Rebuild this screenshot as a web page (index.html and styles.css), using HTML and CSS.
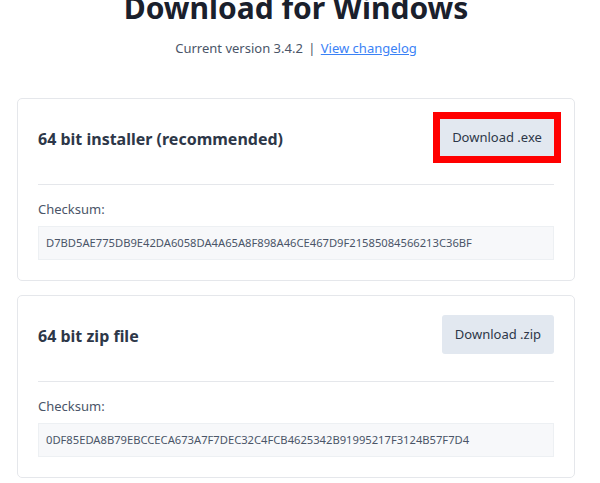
FILE: index.html
```html
<!DOCTYPE html>
<html>
<head>
<meta charset="utf-8">
<link rel="stylesheet" href="styles.css">
</head>
<body>
<div class="page">
  <h1 class="title">Download for Windows</h1>
  <p class="subtitle">Current version 3.4.2 <span class="sep">|</span> <a class="link" href="#">View changelog</a></p>

  <div class="card">
    <div class="card-head">
      <h2 class="card-title">64 bit installer (recommended)</h2>
      <a class="btn btn-highlight" href="#">Download .exe</a>
    </div>
    <div class="card-body">
      <div class="label">Checksum:</div>
      <div class="checksum">D7BD5AE775DB9E42DA6058DA4A65A8F898A46CE467D9F21585084566213C36BF</div>
    </div>
  </div>

  <div class="card">
    <div class="card-head">
      <h2 class="card-title">64 bit zip file</h2>
      <a class="btn" href="#">Download .zip</a>
    </div>
    <div class="card-body">
      <div class="label">Checksum:</div>
      <div class="checksum">0DF85EDA8B79EBCCECA673A7F7DEC32C4FCB4625342B91995217F3124B57F7D4</div>
    </div>
  </div>
</div>
</body>
</html>
```

FILE: styles.css
```css
* { box-sizing: border-box; }
html, body { margin: 0; padding: 0; background: #ffffff; }
body {
  font-family: "Noto Sans", "Open Sans", sans-serif;
  color: #2d3748;
  overflow: hidden;
}
.page {
  width: 558px;
  margin-left: 17px;
}
.title {
  margin: -10px 0 0 0;
  font-size: 30px;
  line-height: 36px;
  font-weight: 700;
  text-align: center;
  color: #1a202c;
}
.subtitle {
  margin: 12px 0 0 0;
  font-size: 13px;
  line-height: 20px;
  text-align: center;
  color: #4a5568;
}
.sep { margin: 0 2px; }
.link {
  color: #3b82f6;
  text-decoration: underline;
}
.card {
  margin-top: 40px;
  border: 1px solid #e5e7eb;
  border-radius: 5px;
  padding: 19px 20px 20px 20px;
}
.card + .card { margin-top: 14px; }
.card-head {
  display: flex;
  align-items: center;
  justify-content: space-between;
  padding-bottom: 27px;
  border-bottom: 1px solid #e5e7eb;
}
.card-title {
  margin: 0;
  padding-top: 3px;
  font-size: 16px;
  font-weight: 700;
  color: #2d3748;
}
.btn {
  display: block;
  height: 39px;
  line-height: 39px;
  padding: 0 13px;
  background: #e2e8f0;
  border-radius: 3px;
  font-size: 13px;
  color: #2d3748;
  text-decoration: none;
}
.btn-highlight {
  width: 116px;
  text-align: center;
  margin-right: -1px;
  outline: 7px solid #ff0000;
  outline-offset: -1px;
  border-radius: 0;
}
.card-body {
  padding-top: 14px;
}
.label {
  font-size: 13px;
  line-height: 20px;
  color: #4a5568;
}
.checksum {
  margin-top: 7px;
  height: 34px;
  line-height: 32px;
  padding: 0 7px;
  background: #f7f8fa;
  border: 1px solid #edf0f3;
  font-size: 11.2px;
  color: #4a5568;
  white-space: nowrap;
}
```
